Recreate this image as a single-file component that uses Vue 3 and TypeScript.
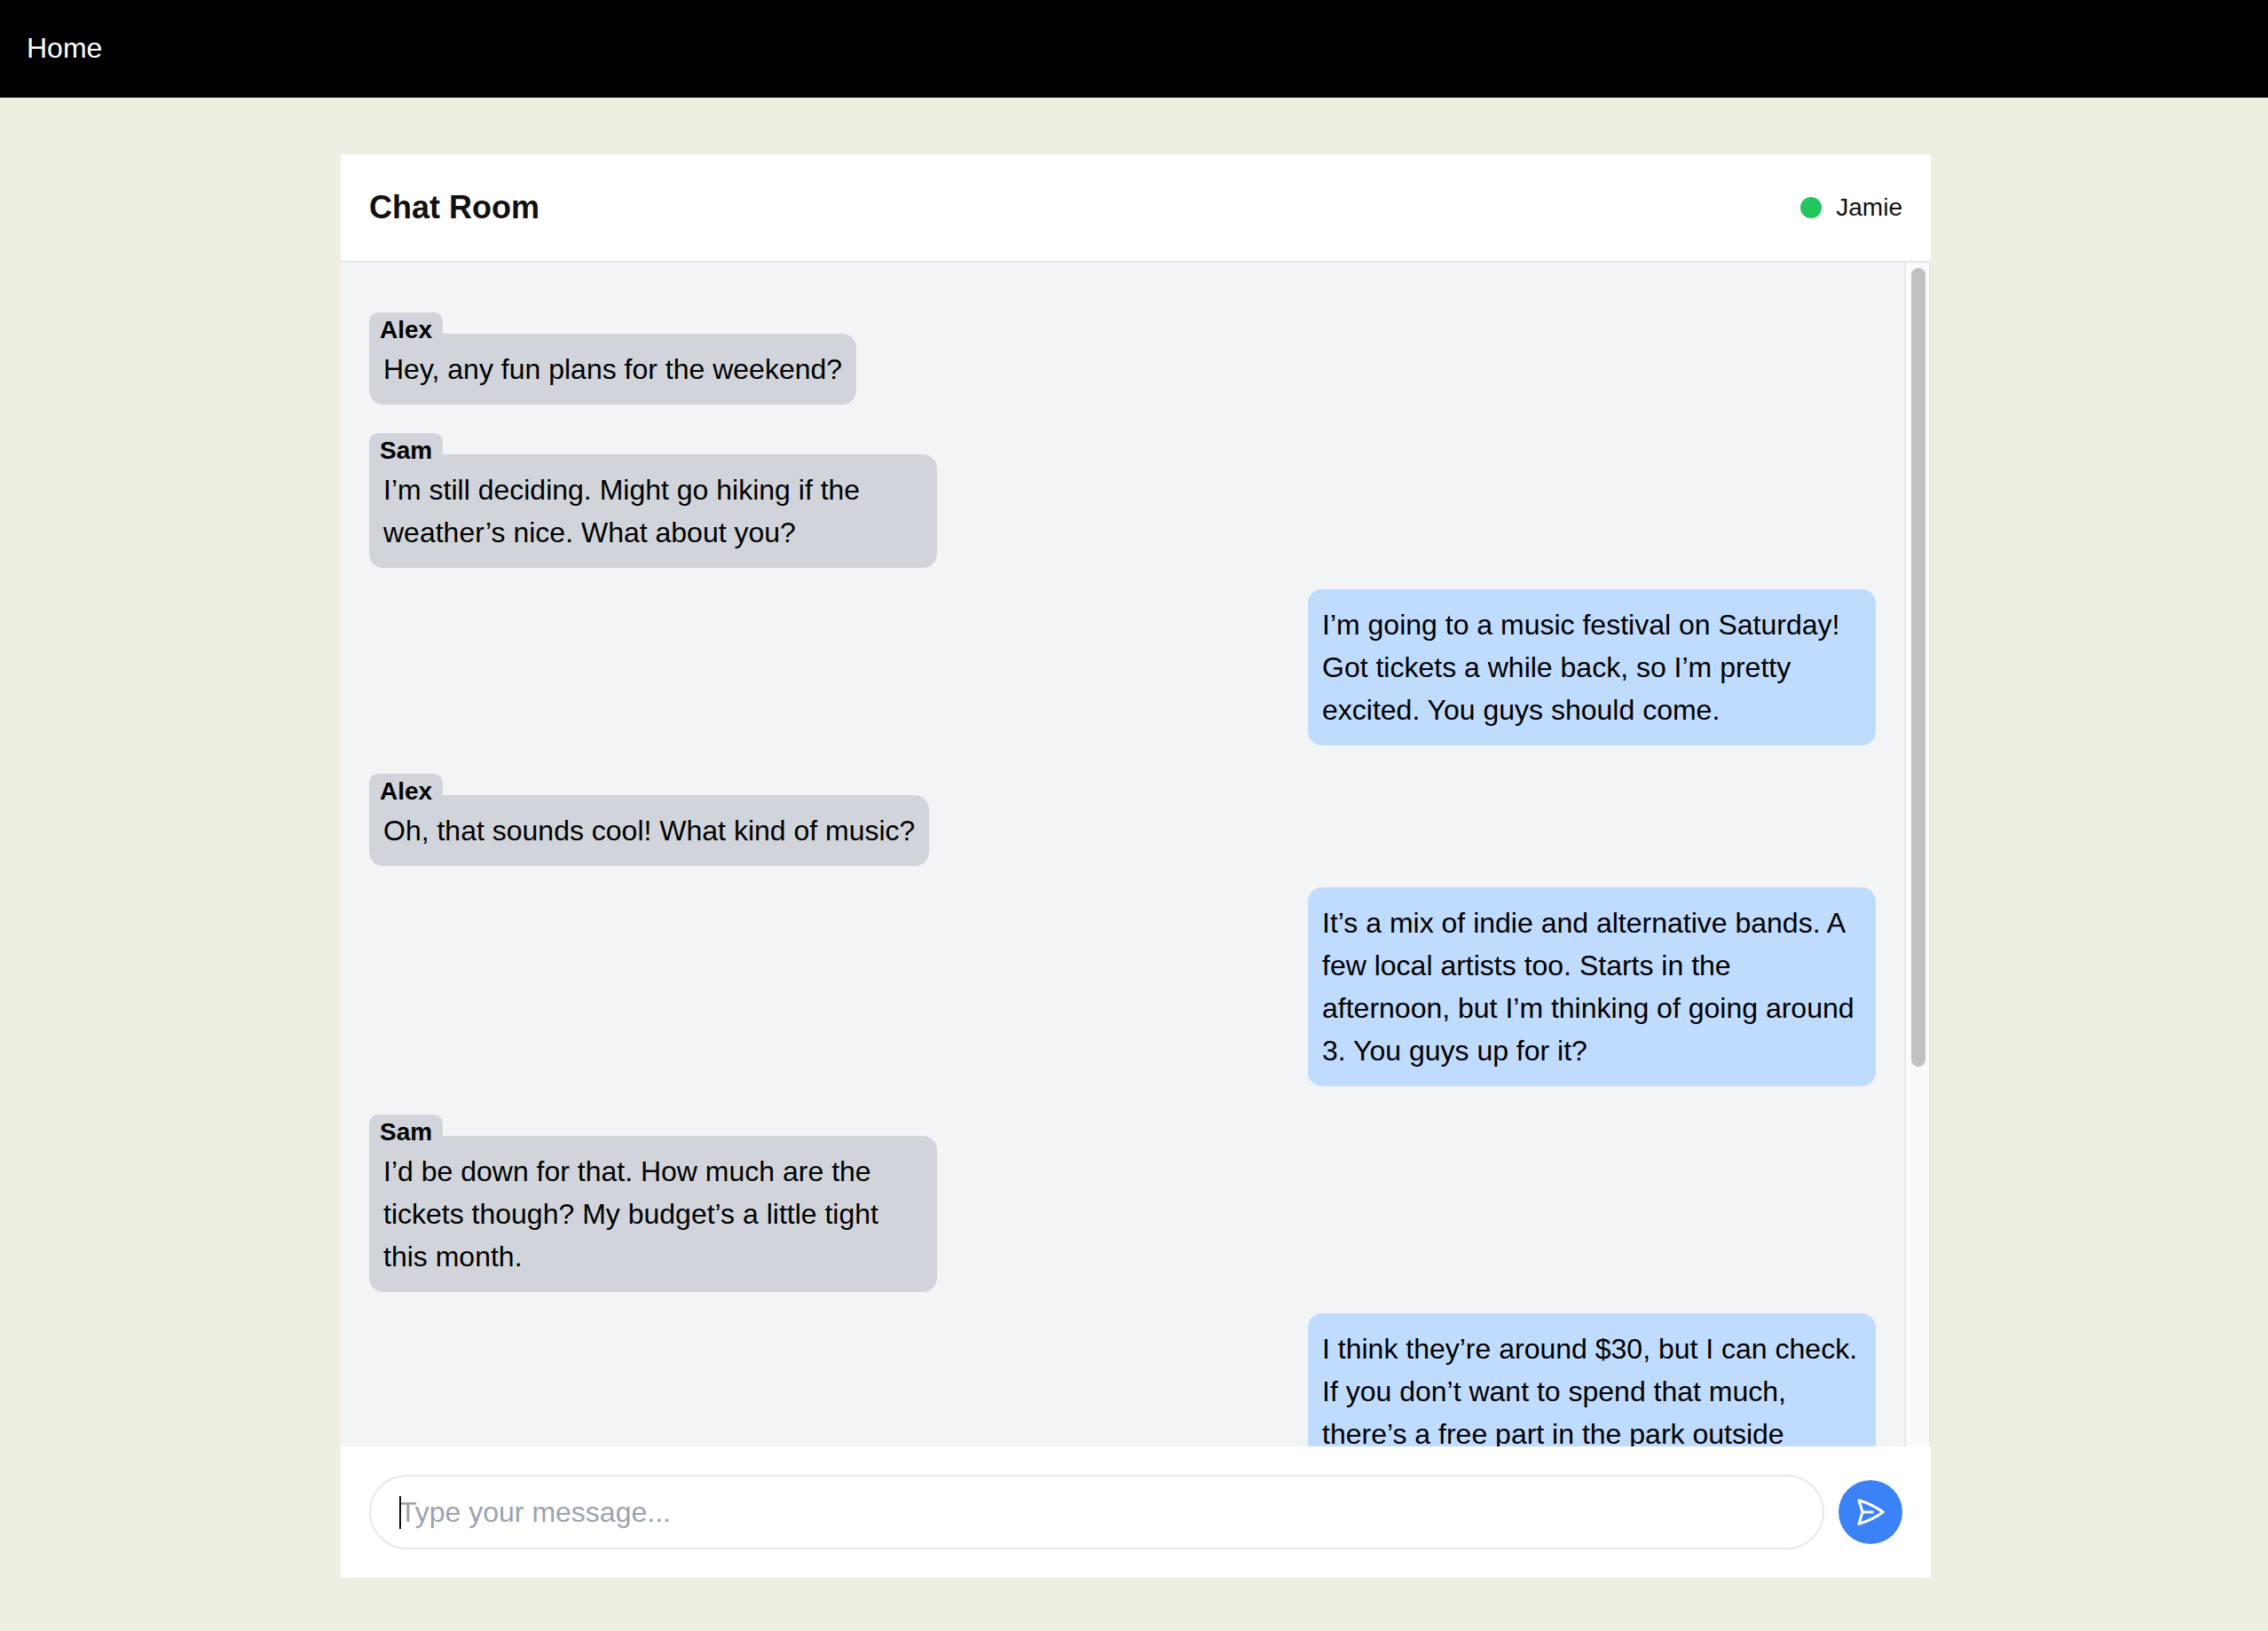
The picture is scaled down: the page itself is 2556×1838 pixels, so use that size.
<template>
  <div class="page">
    <nav class="navbar">
      <a class="nav-link">Home</a>
    </nav>

    <main class="content">
      <section class="chat-card">
        <header class="chat-header">
          <h1 class="chat-title">Chat Room</h1>
          <div class="chat-user">
            <span class="status-dot"></span>
            <span class="user-name">Jamie</span>
          </div>
        </header>

        <div class="chat-body">
          <div class="message-list">
            <div
              v-for="message in messages"
              :key="message.id"
              class="message"
              :class="message.author ? 'message-other' : 'message-own'"
            >
              <div class="bubble">
                <span v-if="message.author" class="author-tag">{{ message.author }}</span>
                {{ message.text }}
              </div>
            </div>
          </div>
          <div class="scroll-track">
            <div class="scroll-thumb"></div>
          </div>
        </div>

        <form class="chat-form" @submit.prevent>
          <div class="input-wrap">
            <input class="chat-input" type="text" placeholder="Type your message..." />
            <span class="caret"></span>
          </div>
          <button class="send-btn" type="submit" aria-label="Send">
            <svg class="send-icon" fill="none" stroke="currentColor" viewBox="0 0 24 24">
              <path
                stroke-linecap="round"
                stroke-linejoin="round"
                stroke-width="2"
                d="M6 12 3.269 3.125A59.769 59.769 0 0 1 21.485 12 59.768 59.768 0 0 1 3.27 20.875L5.999 12Zm0 0h7.5"
              ></path>
            </svg>
          </button>
        </form>
      </section>
    </main>
  </div>
</template>

<script setup lang="ts">
interface Message {
  id: number;
  author?: string;
  text: string;
}

const messages: Message[] = [
  { id: 1, author: 'Alex', text: 'Hey, any fun plans for the weekend?' },
  { id: 2, author: 'Sam', text: 'I’m still deciding. Might go hiking if the weather’s nice. What about you?' },
  { id: 3, text: 'I’m going to a music festival on Saturday! Got tickets a while back, so I’m pretty excited. You guys should come.' },
  { id: 4, author: 'Alex', text: 'Oh, that sounds cool! What kind of music?' },
  { id: 5, text: 'It’s a mix of indie and alternative bands. A few local artists too. Starts in the afternoon, but I’m thinking of going around 3. You guys up for it?' },
  { id: 6, author: 'Sam', text: 'I’d be down for that. How much are the tickets though? My budget’s a little tight this month.' },
  { id: 7, text: 'I think they’re around $30, but I can check. If you don’t want to spend that much, there’s a free part in the park outside' },
];
</script>

<style>
html,
body {
  margin: 0;
  background: #eeefe1;
}
</style>

<style scoped>
.page {
  min-height: 1838px;
  font-family: "Liberation Sans", Arial, sans-serif;
  background: #eeefe1;
}

.navbar {
  display: flex;
  align-items: center;
  height: 110px;
  padding: 0 30px 2px;
  box-sizing: border-box;
  background: #000;
}

.nav-link {
  color: #fff;
  font-size: 32px;
}

.content {
  display: flex;
  justify-content: center;
  padding: 64px 0 0 4px;
}

.chat-card {
  display: flex;
  flex-direction: column;
  width: 1792px;
  height: 1604px;
}

.chat-header {
  display: flex;
  align-items: center;
  justify-content: space-between;
  flex-shrink: 0;
  height: 122px;
  padding: 0 32px;
  box-sizing: border-box;
  border-bottom: 2px solid #e5e7eb;
  background: #fff;
}

.chat-title {
  margin: 0;
  font-size: 36px;
  font-weight: 700;
  color: #111;
}

.chat-user {
  display: flex;
  align-items: center;
  gap: 16px;
}

.status-dot {
  width: 24px;
  height: 24px;
  border-radius: 50%;
  background: #22c55e;
}

.user-name {
  font-size: 28px;
  color: #111;
}

.chat-body {
  flex: 1;
  min-height: 0;
  display: flex;
}

.message-list {
  flex: 1;
  min-width: 0;
  display: flex;
  flex-direction: column;
  gap: 24px;
  padding: 48px 32px 32px;
  overflow: hidden;
  background: #f3f4f6;
}

.scroll-track {
  flex-shrink: 0;
  width: 30px;
  padding: 6px 4px 0 6px;
  box-sizing: border-box;
  border-left: 2px solid #e8e8e8;
  border-right: 2px solid #e8e8e8;
  background: #fafafa;
}

.scroll-thumb {
  height: 900px;
  border-radius: 8px;
  background: #c1c1c1;
}

.message {
  display: flex;
  flex-shrink: 0;
}

.message-own {
  justify-content: flex-end;
}

.message-other {
  padding-top: 32px;
}

.bubble {
  position: relative;
  max-width: 640px;
  padding: 16px;
  box-sizing: border-box;
  border-radius: 16px;
  font-size: 32px;
  line-height: 48px;
  color: #000;
}

.message-other .bubble {
  background: #d1d5db;
}

.message-own .bubble {
  width: 640px;
  background: #bfdbfe;
}

.author-tag {
  position: absolute;
  top: -24px;
  left: 0;
  padding: 0 12px;
  border-radius: 10px 10px 0 0;
  background: #d1d5db;
  font-size: 28px;
  font-weight: 700;
  line-height: 40px;
}

.chat-form {
  display: flex;
  align-items: center;
  gap: 16px;
  flex-shrink: 0;
  padding: 32px;
  background: #fff;
}

.input-wrap {
  position: relative;
  flex: 1;
}

.chat-input {
  display: block;
  width: 100%;
  height: 84px;
  padding: 0 32px;
  box-sizing: border-box;
  border: 2px solid #e5e7eb;
  border-radius: 42px;
  outline: none;
  font-family: inherit;
  font-size: 32px;
  color: #111;
}

.chat-input::placeholder {
  color: #9ca3af;
}

.caret {
  position: absolute;
  top: 24px;
  left: 34px;
  width: 2px;
  height: 37px;
  background: #111;
}

.send-btn {
  display: flex;
  align-items: center;
  justify-content: center;
  flex-shrink: 0;
  width: 72px;
  height: 72px;
  padding: 0;
  border: none;
  border-radius: 50%;
  background: #3b82f6;
  color: #fff;
  cursor: pointer;
}

.send-icon {
  width: 36px;
  height: 36px;
}
</style>
